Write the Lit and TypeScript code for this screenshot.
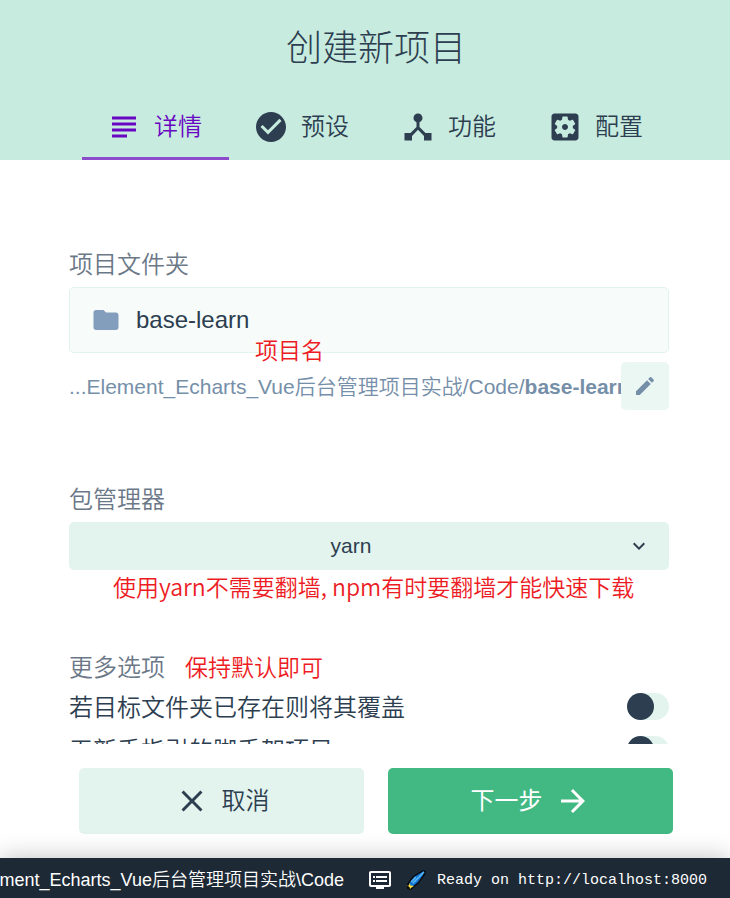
import { LitElement, html, css, svg } from "lit";
import { customElement, property, state } from "lit/decorators.js";
import { classMap } from "lit/directives/class-map.js";

const ICONS: Record<string, unknown> = {
  subject: svg`<path d="M14 17H4v2h10v-2zm6-8H4v2h16V9zM4 15h16v-2H4v2zM4 5v2h16V5H4z"/>`,
  check: svg`<path d="M12 2C6.5 2 2 6.5 2 12s4.500 10 10 10 10-4.500 10-10S17.500 2 12 2zm-2 15l-5-5 1.410-1.410L10 14.170l7.590-7.590L19 8l-9 9z"/>`,
  hub: svg`<path d="M17 16l-4-4V8.820C14.160 8.400 15 7.300 15 6c0-1.660-1.340-3-3-3S9 4.340 9 6c0 1.300.840 2.400 2 2.820V12l-4 4H3v5h5v-3.050l4-4.200 4 4.200V21h5v-5h-4z"/>`,
  settings: svg`<path d="M12 10c-1.100 0-2 .900-2 2s.900 2 2 2 2-.900 2-2-.900-2-2-2zm7-7H5c-1.110 0-2 .900-2 2v14c0 1.100.890 2 2 2h14c1.110 0 2-.900 2-2V5c0-1.100-.890-2-2-2zm-1.750 9c0 .230-.020.460-.050.680l1.480 1.160c.130.110.170.300.080.450l-1.400 2.420c-.090.150-.270.210-.430.150l-1.740-.700c-.360.280-.760.510-1.180.690l-.260 1.850c-.030.170-.180.300-.350.300h-2.800c-.170 0-.320-.130-.350-.290l-.260-1.850c-.430-.180-.820-.410-1.180-.690l-1.740.700c-.160.060-.340 0-.430-.150l-1.400-2.420c-.090-.150-.050-.340.080-.450l1.480-1.160c-.030-.230-.050-.460-.050-.690s.020-.460.050-.680l-1.480-1.160c-.130-.110-.170-.300-.080-.450l1.400-2.420c.090-.150.270-.210.430-.150l1.740.700c.360-.280.760-.510 1.180-.690l.260-1.850c.030-.170.180-.300.350-.300h2.800c.170 0 .320.130.350.290l.260 1.850c.430.180.820.410 1.180.690l1.740-.700c.160-.060.340 0 .430.150l1.400 2.420c.090.150.050.340-.080.450l-1.480 1.160c.030.230.050.460.050.690z"/>`,
  folder: svg`<path d="M10 4H4c-1.100 0-2 .900-2 2v12c0 1.100.900 2 2 2h16c1.100 0 2-.900 2-2V8c0-1.100-.900-2-2-2h-8l-2-2z"/>`,
  edit: svg`<path d="M3 17.250V21h3.750L17.810 9.940l-3.750-3.750L3 17.250zM20.710 7.040c.390-.390.390-1.020 0-1.410l-2.340-2.340c-.390-.390-1.020-.390-1.410 0l-1.830 1.830 3.750 3.750 1.830-1.830z"/>`,
  expand: svg`<path d="M16.590 8.590L12 13.170 7.410 8.590 6 10l6 6 6-6z"/>`,
  close: svg`<path d="M19 6.410L17.590 5 12 10.590 6.410 5 5 6.410 10.590 12 5 17.590 6.410 19 12 13.410 17.590 19 19 17.590 13.410 12z"/>`,
  forward: svg`<path d="M12 4l-1.410 1.410L16.170 11H4v2h12.170l-5.580 5.590L12 20l8-8z"/>`,
  log: svg`<path d="M21 3H3c-1.100 0-2 .900-2 2v12c0 1.100.900 2 2 2h5v2h8v-2h5c1.100 0 2-.900 2-2V5c0-1.100-.900-2-2-2zm0 14H3V5h18v12zm-2-9H8v2h11V8zm0 4H8v2h11v-2zM7 8H5v2h2V8zm0 4H5v2h2v-2z"/>`,
};

@customElement("ui-icon")
class UiIcon extends LitElement {
  @property() name = "";
  static styles = css`
    :host { display: block; flex: none; width: 36px; height: 36px; }
    .glyph { display: block; width: 100%; height: 100%; fill: currentColor; }
  `;
  render() {
    return html`<svg class="glyph" viewBox="0 0 24 24" aria-hidden="true">${ICONS[this.name]}</svg>`;
  }
}

const TABS = [
  { id: "details", icon: "subject", label: "详情" },
  { id: "presets", icon: "check", label: "预设" },
  { id: "features", icon: "hub", label: "功能" },
  { id: "config", icon: "settings", label: "配置" },
];

const OPTIONS = [
  { id: "force", label: "若目标文件夹已存在则将其覆盖" },
  { id: "bare", label: "无新手指引的脚手架项目" },
];

@customElement("app-root")
class AppRoot extends LitElement {
  @state() tab = "details";

  static styles = css`
    :host {
      display: flex;
      flex-direction: column;
      height: 100vh;
      overflow: hidden;
      background: #fff;
      color: #2c3e50;
      font: 350 24px/34px "Liberation Sans", "Noto Sans CJK SC", sans-serif;
    }
    * { box-sizing: border-box; }
    button, input, select { font: inherit; color: inherit; border: 0; margin: 0; }
    button { cursor: pointer; }
    .head { flex: none; background: #c8ebdf; }
    .title { margin: 0; padding: 24px 0 0 22px; font-size: 36px; line-height: 50px; font-weight: 300; text-align: center; }
    .tabs { display: flex; justify-content: center; margin-top: 22px; padding-left: 22px; }
    .tab {
      display: flex; align-items: center; gap: 12px; width: 147px; height: 64px;
      padding: 0 0 0 24px; background: none; border-bottom: 3px solid transparent;
    }
    .tab.active { color: #6806c1; border-color: #8b4bcb; }
    .body { flex: 1; min-height: 0; overflow: hidden; padding: 88px 61px 0 69px; }
    .label { display: block; color: #6b7888; }
    .field { position: relative; }
    .box {
      display: flex; align-items: center; gap: 15px; height: 66px; margin-top: 5px; padding: 0 21px;
      background: #f7fbfa; border: 1px solid #e0f4ed; border-radius: 5px;
    }
    .folder { width: 30px; height: 30px; color: #839dbc; }
    .name { flex: 1; min-width: 0; padding: 0; background: none; outline: none; }
    .path { display: flex; align-items: center; height: 48px; margin-top: 9px; color: #768fa9; font-size: 21px; }
    .where { flex: 1; min-width: 0; padding-top: 2px; overflow: hidden; white-space: nowrap; }
    .where b { font-weight: 700; }
    .edit {
      display: flex; align-items: center; justify-content: center; flex: none;
      width: 48px; height: 48px; padding: 0; background: #ebf7f3; border-radius: 5px;
    }
    .small { width: 24px; height: 24px; }
    .manager { margin-top: 73px; }
    .pick { display: grid; align-items: center; margin-top: 5px; background: #e3f4ee; border-radius: 5px; }
    .pick > * { grid-area: 1 / 1; }
    .select {
      width: 100%; height: 48px; padding: 0 36px 0 0; appearance: none; background: none;
      font-size: 21px; text-align: center; text-align-last: center;
    }
    .arrow { justify-self: end; width: 24px; height: 24px; margin-right: 18px; pointer-events: none; }
    .note { position: absolute; color: #ed1c24; font-size: 23px; white-space: nowrap; }
    .note.wide { font-family: "Noto Sans CJK SC", sans-serif; }
    .on-name { left: 186px; top: 86px; }
    .on-manager { left: 44px; bottom: -33px; }
    .on-more { left: 116px; top: 0; }
    .more { margin-top: 81px; }
    .option { display: flex; align-items: flex-start; justify-content: space-between; margin-top: 6px; }
    .option + .option { margin-top: 9px; }
    .switch {
      appearance: none; flex: none; width: 42px; height: 27px; margin-top: 2px; border-radius: 14px;
      background: #e3f4ee; cursor: pointer;
    }
    .switch::before { content: ""; display: block; width: 27px; height: 27px; border-radius: 14px; background: #2c3e50; }
    .switch:checked::before { margin-left: 15px; background: #42b983; }
    .actions { flex: none; display: flex; gap: 24px; padding: 24px 57px 24px 79px; }
    .action {
      flex: 1; display: flex; align-items: center; justify-content: center; gap: 12px;
      height: 66px; background: #e3f4ee; border-radius: 5px;
    }
    .action.primary { background: #42b983; color: #fff; font-weight: 400; }
    .status {
      flex: none; display: flex; align-items: center; height: 40px; padding: 3px 23px 0 0;
      background: #1d2935; color: #fff; font-size: 18px; box-shadow: 0 0 24px rgba(0, 0, 0, 0.25);
    }
    .cwd { flex: 1; min-width: 0; display: flex; justify-content: flex-end; overflow: hidden; white-space: nowrap; }
    .log { width: 24px; height: 24px; margin-left: 24px; }
    .comet { flex: none; width: 20px; height: 20px; margin-left: 14px; }
    .message { margin-left: 11px; padding-top: 2px; font: 15px/24px "Liberation Mono", monospace; white-space: pre; }
  `;

  render() {
    return html`
      <header class="head">
        <h1 class="title">创建新项目</h1>
        <nav class="tabs" role="tablist">
          ${TABS.map(
            (t) => html`<button
              role="tab"
              aria-selected=${this.tab === t.id}
              class=${classMap({ tab: true, active: this.tab === t.id })}
              @click=${() => (this.tab = t.id)}
            ><ui-icon name=${t.icon}></ui-icon><span>${t.label}</span></button>`
          )}
        </nav>
      </header>
      <main class="body">
        <section class="field">
          <label class="label" for="name">项目文件夹</label>
          <div class="box">
            <ui-icon class="folder" name="folder"></ui-icon>
            <input class="name" id="name" .value=${"base-learn"} />
          </div>
          <div class="path">
            <div class="where">...Element_Echarts_Vue后台管理项目实战/Code/<b>base-learn</b></div>
            <button class="edit" aria-label="Edit"><ui-icon class="small" name="edit"></ui-icon></button>
          </div>
          <div class="note on-name">项目名</div>
        </section>
        <section class="field manager">
          <label class="label" for="manager">包管理器</label>
          <div class="pick">
            <select class="select" id="manager"><option>yarn</option></select>
            <ui-icon class="arrow" name="expand"></ui-icon>
          </div>
          <div class="note wide on-manager">使用yarn不需要翻墙, npm有时要翻墙才能快速下载</div>
        </section>
        <section class="field more">
          <div class="label">更多选项</div>
          <div class="note on-more">保持默认即可</div>
          ${OPTIONS.map(
            (o) => html`<div class="option">
              <label for=${o.id}>${o.label}</label>
              <input class="switch" type="checkbox" role="switch" id=${o.id} />
            </div>`
          )}
        </section>
      </main>
      <div class="actions">
        <button class="action"><ui-icon name="close"></ui-icon><span>取消</span></button>
        <button class="action primary"><span>下一步</span><ui-icon name="forward"></ui-icon></button>
      </div>
      <footer class="status">
        <div class="cwd"><span>Element_Echarts_Vue后台管理项目实战\\Code</span></div>
        <ui-icon class="log" name="log"></ui-icon>
        <svg class="comet" viewBox="0 0 20 20" aria-hidden="true">
          <path d="M1 14L7 6 17 0 20 1 19 5 13 13 5 20 1 19z" fill="#080c12" />
          <path d="M3 14L8 7 18 1 17 5 12 12 6 17z" fill="#1478d4" />
          <path d="M7 13L18 2M5 12L10 7" stroke="#5bb8f5" stroke-width="1.500" />
          <path d="M3 13l1.500 2.500L8 16l-2.500 1.500L4 19l-.500-2L1 15.500h2z" fill="#ffe13a" />
        </svg>
        <span class="message">Ready on http://localhost:8000</span>
      </footer>
    `;
  }
}
